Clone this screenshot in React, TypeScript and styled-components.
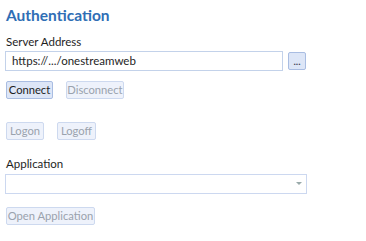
import React from "react";
import styled, { createGlobalStyle } from "styled-components";

const Global = createGlobalStyle`
  html, body { margin: 0; padding: 0; background: #fff; }
  body { font-family: Lato, "Open Sans", sans-serif; }
`;

const Panel = styled.div`
  display: flex;
  flex-direction: column;
  padding: 4px 0 0 5px;
  width: 302px;
`;

const Title = styled.h1`
  margin: 0;
  font-size: 15.5px;
  font-weight: 700;
  color: #2f6eb5;
  line-height: 22px;
  padding-left: 1px;
`;

const Label = styled.div<{ $top: number }>`
  margin-top: ${(p) => p.$top}px;
  font-size: 11.5px;
  line-height: 14px;
  color: #1e1e1e;
  padding-left: 1px;
`;

const InputRow = styled.div`
  display: flex;
  align-items: center;
  gap: 5px;
  margin-top: 2px;
`;

const TextBox = styled.div`
  box-sizing: border-box;
  width: 278px;
  height: 20px;
  border: 1px solid #c3d2ea;
  padding: 0 6px;
  font-size: 11.5px;
  line-height: 18px;
  color: #1e1e1e;
  white-space: nowrap;
`;

const ButtonRow = styled.div<{ $top: number }>`
  display: flex;
  gap: 13px;
  margin-top: ${(p) => p.$top}px;
  padding-left: 1px;
`;

const Btn = styled.button<{ $disabled?: boolean; $w: number }>`
  box-sizing: border-box;
  width: ${(p) => p.$w}px;
  height: 18px;
  padding: 0;
  font-family: inherit;
  font-size: 11.2px;
  line-height: 16px;
  white-space: nowrap;
  border-radius: 2px;
  border: 1px solid ${(p) => (p.$disabled ? "#cdd9ef" : "#a9bde2")};
  background: ${(p) => (p.$disabled ? "#eef2fb" : "#dde6f7")};
  color: ${(p) => (p.$disabled ? "#9aa2ad" : "#1e1e1e")};
`;

const Browse = styled(Btn)`
  font-size: 10px;
  line-height: 12px;
  font-weight: 700;
  color: #445;
`;

const Select = styled.div`
  position: relative;
  box-sizing: border-box;
  width: 302px;
  height: 20px;
  margin-top: 3px;
  border: 1px solid #ccd8f0;
`;

const Arrow = styled.span`
  position: absolute;
  right: 4px;
  top: 7px;
  width: 0;
  height: 0;
  border-left: 3px solid transparent;
  border-right: 3px solid transparent;
  border-top: 3px solid #9aa;
`;

export default function App() {
  return (
    <>
      <Global />
      <Panel>
        <Title>Authentication</Title>
        <Label $top={9}>Server Address</Label>
        <InputRow>
          <TextBox>https://.../onestreamweb</TextBox>
          <Browse $w={18}>...</Browse>
        </InputRow>
        <ButtonRow $top={10}>
          <Btn $w={47}>Connect</Btn>
          <Btn $w={58} $disabled>Disconnect</Btn>
        </ButtonRow>
        <ButtonRow $top={23}>
          <Btn $w={38} $disabled>Logon</Btn>
          <Btn $w={39} $disabled>Logoff</Btn>
        </ButtonRow>
        <Label $top={17}>Application</Label>
        <Select>
          <Arrow />
        </Select>
        <ButtonRow $top={13}>
          <Btn $w={89} $disabled>Open Application</Btn>
        </ButtonRow>
      </Panel>
    </>
  );
}
